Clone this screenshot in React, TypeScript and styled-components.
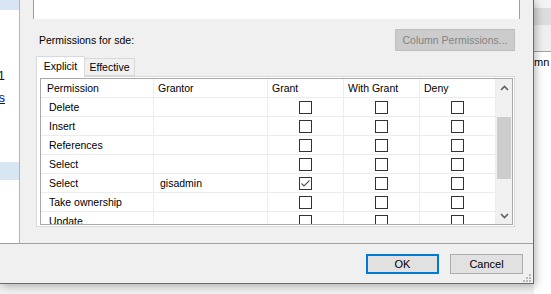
import styled, { createGlobalStyle } from 'styled-components';

const GlobalStyle = createGlobalStyle`
  html, body {
    margin: 0;
    padding: 0;
    background: #f0f0f0;
    overflow: hidden;
  }
  body {
    font-family: "Liberation Sans", Arial, sans-serif;
    font-size: 10.5px;
    color: #000;
  }
`;

const Page = styled.div`
  display: flex;
  width: 551px;
  height: 294px;
  background: #f0f0f0;
`;

const Dialog = styled.div`
  position: relative;
  z-index: 1;
  flex-shrink: 0;
  width: 534px;
  height: 284px;
  box-sizing: border-box;
  display: flex;
  flex-direction: column;
  background: #f0f0f0;
  border-right: 1px solid #1a7fd4;
  border-bottom: 1px solid #1a7fd4;
  box-shadow: 2px 2px 8px rgba(0, 0, 0, 0.28);
`;

const Body = styled.div`
  display: flex;
  height: 243px;
`;

const LeftPane = styled.div`
  width: 20px;
  box-sizing: border-box;
  background: #fff;
  border-right: 1px solid #b4b4b4;
  display: flex;
  flex-direction: column;
  align-items: flex-end;
  overflow: hidden;
  font-size: 13px;
`;

const PaneBand = styled.div<{ $top: number; $height: number }>`
  align-self: stretch;
  margin-top: ${(p) => p.$top}px;
  height: ${(p) => p.$height}px;
  background: #d8e5f2;
`;

const PaneText = styled.div<{ $top: number; $link?: boolean }>`
  margin-top: ${(p) => p.$top}px;
  padding-right: 14px;
  line-height: 16px;
  white-space: nowrap;
  color: ${(p) => (p.$link ? '#0000ff' : '#1a1a1a')};
  text-decoration: ${(p) => (p.$link ? 'underline' : 'none')};
`;

const Content = styled.div`
  flex: 1;
  display: flex;
  flex-direction: column;
`;

const TopBox = styled.div`
  margin: 0 13px;
  height: 19px;
  background: #fff;
  border-left: 1px solid #a0a0a0;
  border-right: 1px solid #a0a0a0;
`;

const LabelRow = styled.div`
  margin-top: 10px;
  height: 22px;
  padding: 0 18px 0 19px;
  display: flex;
  align-items: center;
  justify-content: space-between;
`;

const DisabledButton = styled.div`
  width: 120px;
  height: 22px;
  box-sizing: border-box;
  border: 1px solid #bfbfbf;
  background: #cccccc;
  color: #838383;
  display: flex;
  align-items: center;
  justify-content: center;
`;

const TabStrip = styled.div`
  margin: 5px 0 0 16px;
  height: 20px;
  display: flex;
  align-items: flex-end;
`;

const Tab = styled.div<{ $active?: boolean }>`
  position: relative;
  z-index: ${(p) => (p.$active ? 2 : 1)};
  box-sizing: border-box;
  width: ${(p) => (p.$active ? 49 : 51)}px;
  height: ${(p) => (p.$active ? 21 : 18)}px;
  margin-bottom: ${(p) => (p.$active ? -1 : 0)}px;
  margin-left: ${(p) => (p.$active ? 0 : -1)}px;
  background: ${(p) => (p.$active ? '#fff' : '#f0f0f0')};
  border: 1px solid #d9d9d9;
  border-bottom: ${(p) => (p.$active ? 'none' : '1px solid #d9d9d9')};
  display: flex;
  align-items: center;
  justify-content: center;
  padding-bottom: ${(p) => (p.$active ? 2 : 0)}px;
`;

const TabPanel = styled.div`
  margin: 0 18px 0 16px;
  height: 151px;
  box-sizing: border-box;
  border: 1px solid #d9d9d9;
  background: #fff;
  padding: 1px 1px 1px 3px;
`;

const Grid = styled.div`
  height: 147px;
  box-sizing: border-box;
  border: 1px solid #a8a8a8;
  display: flex;
  background: #fff;
`;

const Table = styled.div`
  width: 455px;
  overflow: hidden;
  display: grid;
  grid-template-columns: 113px 114px 76px 76px 76px;
  grid-auto-rows: 19px;
`;

const Cell = styled.div<{ $pad?: number; $center?: boolean }>`
  box-sizing: border-box;
  border-right: 1px solid #ececec;
  border-bottom: 1px solid #ececec;
  display: flex;
  align-items: center;
  justify-content: ${(p) => (p.$center ? 'center' : 'flex-start')};
  padding-left: ${(p) => p.$pad ?? 0}px;
  white-space: nowrap;
`;

const CheckBox = styled.div`
  width: 13px;
  height: 13px;
  box-sizing: border-box;
  border: 1px solid #333;
  background: #fff;
  margin-right: 1px;
  display: flex;
  align-items: center;
  justify-content: center;
`;

const ScrollBar = styled.div`
  width: 16px;
  background: #f0f0f0;
  display: flex;
  flex-direction: column;
`;

const ScrollArrow = styled.div`
  height: 17px;
  display: flex;
  align-items: center;
  justify-content: center;
`;

const ScrollTrack = styled.div`
  flex: 1;
`;

const Thumb = styled.div`
  margin: 21px 1px 0;
  height: 62px;
  background: #cdcdcd;
`;

const ButtonBar = styled.div`
  height: 40px;
  box-sizing: border-box;
  border-top: 1px solid #a0a0a0;
  display: flex;
  justify-content: flex-end;
  align-items: flex-start;
  gap: 11px;
  padding: 10px 10px 0 0;
`;

const Button = styled.div<{ $primary?: boolean }>`
  width: 73px;
  height: 20px;
  box-sizing: border-box;
  background: #e1e1e1;
  border: ${(p) => (p.$primary ? '2px solid #0078d7' : '1px solid #adadad')};
  display: flex;
  align-items: center;
  justify-content: center;
  font-size: 11px;
`;

const Grip = styled.svg`
  position: absolute;
  right: 2px;
  bottom: 1px;
`;

const OuterStrip = styled.div`
  flex: 1;
  display: flex;
  flex-direction: column;
  background: #fff;
  overflow: hidden;
`;

const StripBand = styled.div<{ $height: number; $bg: string }>`
  height: ${(p) => p.$height}px;
  background: ${(p) => p.$bg};
`;

const StripText = styled.div`
  padding-top: 3px;
  font-size: 11px;
  line-height: 14px;
  white-space: nowrap;
`;

const Check = ({ checked }: { checked?: boolean }) => (
  <CheckBox>
    {checked && (
      <svg width="11" height="11" viewBox="0 0 11 11">
        <polyline points="1.5,5.5 4,8 9.5,2.5" fill="none" stroke="#555" strokeWidth="1.1" />
      </svg>
    )}
  </CheckBox>
);

const Chevron = ({ down }: { down?: boolean }) => (
  <svg width="9" height="6" viewBox="0 0 9 6">
    <polyline
      points={down ? '1,1 4.5,4.5 8,1' : '1,5 4.5,1.5 8,5'}
      fill="none"
      stroke="#606060"
      strokeWidth="1.6"
    />
  </svg>
);

const rows = [
  { name: 'Delete', grantor: '', grant: false },
  { name: 'Insert', grantor: '', grant: false },
  { name: 'References', grantor: '', grant: false },
  { name: 'Select', grantor: '', grant: false },
  { name: 'Select', grantor: 'gisadmin', grant: true },
  { name: 'Take ownership', grantor: '', grant: false },
  { name: 'Update', grantor: '', grant: false },
];

export default function App() {
  return (
    <Page>
      <GlobalStyle />
      <Dialog>
        <Body>
          <LeftPane>
            <PaneBand $top={0} $height={10} />
            <PaneText $top={58}>SQLSERVER01</PaneText>
            <PaneText $top={6} $link>
              View connection properties
            </PaneText>
            <PaneBand $top={56} $height={18} />
          </LeftPane>
          <Content>
            <TopBox />
            <LabelRow>
              <span>Permissions for sde:</span>
              <DisabledButton>Column Permissions...</DisabledButton>
            </LabelRow>
            <TabStrip>
              <Tab $active>Explicit</Tab>
              <Tab>Effective</Tab>
            </TabStrip>
            <TabPanel>
              <Grid>
                <Table>
                  <Cell $pad={6}>Permission</Cell>
                  <Cell $pad={4}>Grantor</Cell>
                  <Cell $pad={4}>Grant</Cell>
                  <Cell $pad={4}>With Grant</Cell>
                  <Cell $pad={4}>Deny</Cell>
                  {rows.map((r, i) => [
                    <Cell key={`n${i}`} $pad={8}>{r.name}</Cell>,
                    <Cell key={`g${i}`} $pad={6}>{r.grantor}</Cell>,
                    <Cell key={`a${i}`} $center><Check checked={r.grant} /></Cell>,
                    <Cell key={`w${i}`} $center><Check /></Cell>,
                    <Cell key={`d${i}`} $center><Check /></Cell>,
                  ])}
                </Table>
                <ScrollBar>
                  <ScrollArrow><Chevron /></ScrollArrow>
                  <ScrollTrack><Thumb /></ScrollTrack>
                  <ScrollArrow><Chevron down /></ScrollArrow>
                </ScrollBar>
              </Grid>
            </TabPanel>
          </Content>
        </Body>
        <ButtonBar>
          <Button $primary>OK</Button>
          <Button>Cancel</Button>
        </ButtonBar>
        <Grip width="9" height="9" viewBox="0 0 9 9">
          <rect x="7" y="1" width="2" height="2" fill="#b8b8b8" />
          <rect x="4" y="4" width="2" height="2" fill="#b8b8b8" />
          <rect x="7" y="4" width="2" height="2" fill="#b8b8b8" />
          <rect x="1" y="7" width="2" height="2" fill="#b8b8b8" />
          <rect x="4" y="7" width="2" height="2" fill="#b8b8b8" />
          <rect x="7" y="7" width="2" height="2" fill="#b8b8b8" />
        </Grip>
      </Dialog>
      <OuterStrip>
        <StripBand $height={8} $bg="#f3f3f3" />
        <StripBand $height={17} $bg="#dcdcdc" />
        <StripBand $height={26} $bg="#efefef" />
        <StripBand $height={1} $bg="#a0a0a0" />
        <StripText>mn name</StripText>
      </OuterStrip>
    </Page>
  );
}
